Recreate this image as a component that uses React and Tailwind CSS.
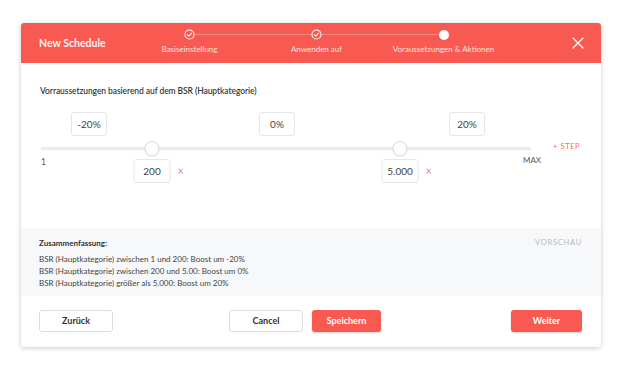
import React from 'react';

const steps = [
    { label: 'Basiseinstellung', done: true },
    { label: 'Anwenden auf', done: true },
    { label: 'Voraussetzungen & Aktionen', done: false },
];

// positions are px along the 490px track
const boosts = [
    { value: '-20%', at: 48 },
    { value: '0%', at: 236 },
    { value: '20%', at: 426 },
];
const thumbs = [
    { value: '200', at: 111 },
    { value: '5.000', at: 359 },
];

const summary = [
    'BSR (Hauptkategorie) zwischen 1 und 200: Boost um -20%',
    'BSR (Hauptkategorie) zwischen 200 und 5.00: Boost um 0%',
    'BSR (Hauptkategorie) größer als 5.000: Boost um 20%',
];

function CheckCircle() {
    return (
        <svg width="11" height="11" viewBox="0 0 12 12" fill="none">
            <circle cx="6" cy="6" r="5" stroke="white" strokeWidth="1.1" />
            <path d="M3.6 6.1 L5.3 7.7 L8.4 4.5" stroke="white" strokeWidth="1.1" strokeLinecap="round" strokeLinejoin="round" />
        </svg>
    );
}

function Stepper() {
    return (
        <div className="relative flex w-[381px] h-full">
            <div className="absolute left-[63px] right-[63px] top-[11px] h-[1px] bg-[#fb8a83]" />
            {steps.map((s, i) => (
                <div key={i} className="relative flex-1 flex flex-col items-center pt-[6px]">
                    <div className="h-[11px] w-[11px] flex items-center justify-center bg-[#f85a52] rounded-full">
                        {s.done ? <CheckCircle /> : <div className="h-[10px] w-[10px] rounded-full bg-white" />}
                    </div>
                    <span className="mt-[3px] text-[8px] leading-[12px] text-[#fde0de] whitespace-nowrap">{s.label}</span>
                </div>
            ))}
        </div>
    );
}

function ValueBox({ children, className = '' }) {
    return (
        <div className={`h-[24px] w-[36px] flex items-center justify-center border border-[#e6e6e6] rounded-[3px] bg-white text-[10px] text-[#444] ${className}`}>
            {children}
        </div>
    );
}

function RangeSlider() {
    return (
        <div className="flex mt-[15px]">
            <div className="relative w-[490px] h-[73px] ml-[1px]">
                {boosts.map((b, i) => (
                    <div key={i} className="absolute top-0 -translate-x-1/2" style={{ left: b.at }}>
                        <ValueBox>{b.value}</ValueBox>
                    </div>
                ))}
                <div className="absolute left-0 right-0 top-[35px] h-[3px] rounded-full bg-[#ebebeb]" />
                {thumbs.map((t, i) => (
                    <div key={i} className="absolute top-[29px] -translate-x-1/2 flex flex-col items-center" style={{ left: t.at }}>
                        <div className="h-[15px] w-[15px] rounded-full bg-white border border-[#dcdcdc] shadow-[0_1px_2px_rgba(0,0,0,0.08)]" />
                        <div className="relative mt-[3px]">
                            <ValueBox className="w-[37px]">{t.value}</ValueBox>
                            <span className="absolute left-[44px] top-[5px] text-[11px] leading-[14px] text-[#f0837c]">×</span>
                        </div>
                    </div>
                ))}
                <span className="absolute left-0 top-[44px] text-[8.5px] text-[#555]">1</span>
                <span className="absolute right-[-10px] top-[42px] text-[8px] text-[#555]">MAX</span>
            </div>
            <span className="ml-[22px] mt-[30px] text-[7.5px] leading-[10px] tracking-[0.08em] text-[#f26b63] h-fit">+ STEP</span>
        </div>
    );
}

export default function App() {
    return (
        <div className="w-[624px] h-[368px] bg-white pt-[23px] pl-[21px]" style={{ fontFamily: 'Lato, "Noto Sans", sans-serif' }}>
            <div className="w-[580px] h-[324px] bg-white rounded-[3px] shadow-[0_1px_5px_rgba(0,0,0,0.22)] overflow-hidden flex flex-col">
                <div className="h-[40px] bg-[#f85a52] flex items-start pl-[18px] pr-[17px]">
                    <span className="w-[87px] mt-[13px] text-[10.5px] leading-[14px] font-bold text-[#fff3f2] whitespace-nowrap">New Schedule</span>
                    <Stepper />
                    <div className="flex-1 flex justify-end mt-[14px]">
                        <svg width="12" height="12" viewBox="0 0 12 12">
                            <path d="M1 1 L11 11 M11 1 L1 11" stroke="white" strokeWidth="1.3" strokeLinecap="round" />
                        </svg>
                    </div>
                </div>

                <div className="h-[165px] pl-[19px] pt-[22px]">
                    <p className="text-[8.5px] leading-[12px] font-semibold tracking-[-0.01em] text-[#3a3a3a]">Vorraussetzungen basierend auf dem BSR (Hauptkategorie)</p>
                    <RangeSlider />
                </div>

                <div className="h-[68px] bg-[#f7f8fa] pl-[18px] pr-[19px] pt-[9px] flex justify-between">
                    <div>
                        <p className="text-[8px] leading-[12px] font-bold text-[#333] mb-[4px]">Zusammenfassung:</p>
                        {summary.map((line, i) => (
                            <p key={i} className="text-[8px] leading-[12px] text-[#444]">{line}</p>
                        ))}
                    </div>
                    <span className="text-[7.5px] leading-[12px] tracking-[0.1em] text-[#b5b8bc]">VORSCHAU</span>
                </div>

                <div className="flex-1 flex items-start pt-[14px] pl-[18px] pr-[19px]">
                    <button className="h-[22px] w-[74px] rounded-[3px] border border-[#dedede] bg-white text-[9px] font-bold text-[#333]">Zurück</button>
                    <button className="ml-[116px] h-[22px] w-[74px] rounded-[3px] border border-[#dedede] bg-white text-[9px] font-bold text-[#333]">Cancel</button>
                    <button className="ml-[9px] h-[22px] w-[69px] rounded-[3px] bg-[#f85a52] shadow-[0_1px_2px_rgba(0,0,0,0.2)] text-[9px] font-bold text-white">Speichern</button>
                    <button className="ml-auto h-[22px] w-[71px] rounded-[3px] bg-[#f85a52] shadow-[0_1px_2px_rgba(0,0,0,0.2)] text-[9px] font-bold text-white">Weiter</button>
                </div>
            </div>
        </div>
    );
}
